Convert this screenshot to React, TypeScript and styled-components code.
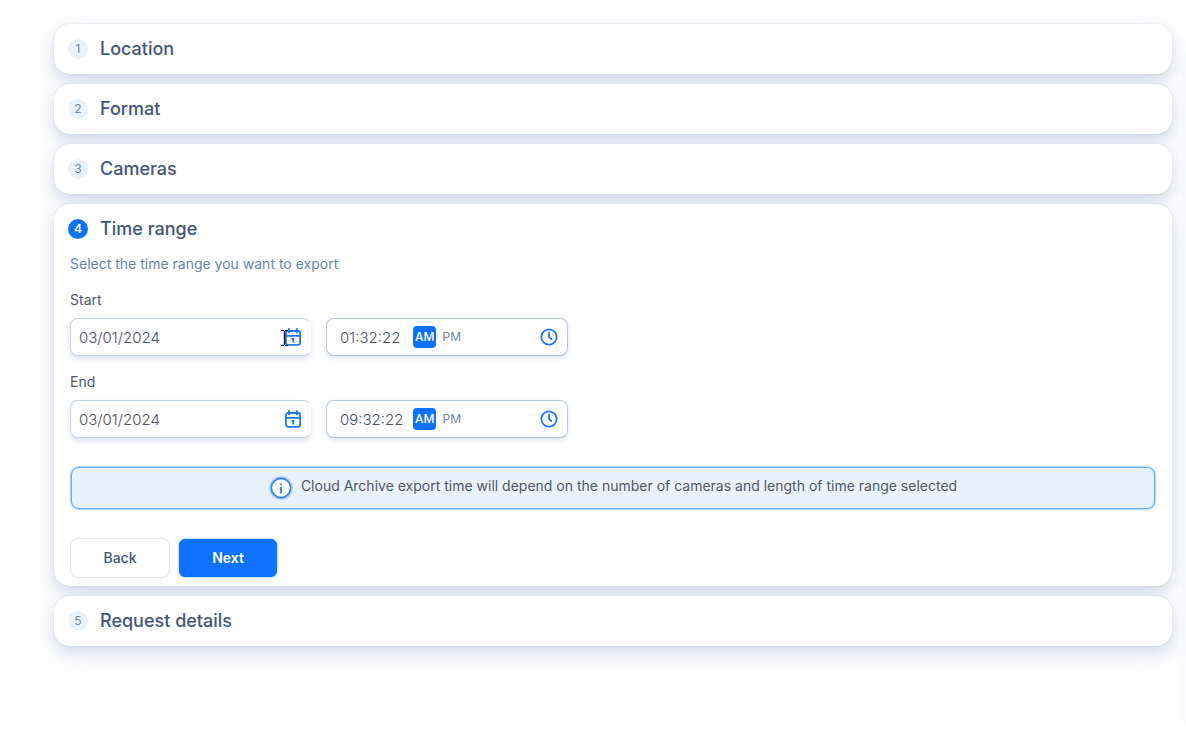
import React, { useState } from "react";
import styled, { createGlobalStyle } from "styled-components";

const GlobalStyle = createGlobalStyle`
  *, *::before, *::after { box-sizing: border-box; }
  body {
    margin: 0;
    background: #fefefe;
    color: #50586a;
    font-family: Inter, "Liberation Sans", sans-serif;
    font-size: 14px;
    line-height: 20px;
  }
  button, input { font: inherit; }
`;

const Page = styled.div`
  display: flex;
  min-height: 100vh;
  overflow: hidden;
`;

const Wizard = styled.main`
  flex: 1;
  display: flex;
  flex-direction: column;
  gap: 10px;
  padding: 24px 14px 108px 54px;
`;

const PageEdge = styled.div`
  width: 0;
  margin: 60px 0 30px;
  box-shadow: 0 0 10px 1px rgba(120, 130, 210, 0.16);
`;

const Card = styled.section`
  border-radius: 16px;
  background: #fefefe;
  box-shadow: 0 0 1px 1px rgba(178, 190, 220, 0.16),
    0 8px 22px rgba(98, 116, 185, 0.16), 0 6px 12px rgba(70, 105, 150, 0.12);
`;

const Heading = styled.h2`
  margin: 0;
`;

const HeaderButton = styled.button`
  display: flex;
  align-items: center;
  gap: 12px;
  width: 100%;
  height: 50px;
  padding: 0 14px;
  border: 0;
  background: none;
  color: #43557a;
  font-size: 18px;
  font-weight: 500;
  text-align: left;
  cursor: pointer;
`;

const StepNumber = styled.span<{ $active: boolean }>`
  width: 20px;
  height: 20px;
  border-radius: 50%;
  background: ${(p) => (p.$active ? "#0d72ff" : "#ebf1f8")};
  color: ${(p) => (p.$active ? "#ffffff" : "#7388a8")};
  font-size: 12px;
  font-weight: ${(p) => (p.$active ? 600 : 400)};
  line-height: 20px;
  text-align: center;
`;

const Body = styled.form`
  padding: 0 16px 8px;
`;

const Hint = styled.p`
  margin: 0 0 16px;
  color: #6c85ad;
`;

const FieldGroup = styled.div`
  display: flex;
  flex-direction: column;
  gap: 8px;
  margin-bottom: 16px;
`;

const Label = styled.label`
  align-self: flex-start;
`;

const FieldRow = styled.div`
  display: flex;
  flex-wrap: wrap;
  gap: 15px;
`;

const Field = styled.div<{ $time?: boolean }>`
  position: relative;
  display: flex;
  align-items: center;
  width: ${(p) => (p.$time ? 242 : 241)}px;
  height: 38px;
  padding: ${(p) => (p.$time ? "0 9px 0 13px" : "0 8px")};
  border: 1px solid;
  border-color: ${(p) =>
    p.$time ? "#bccadf #bccadf #aebdd4" : "#c3d3e6 transparent #c9d5e9 #c9d7e8"};
  border-radius: 8px;
  background: #fefefe;
  box-shadow: ${(p) =>
    p.$time ? "0 2px 5px rgba(90, 105, 175, 0.18)" : "0 3px 5px rgba(90, 105, 175, 0.2)"};
`;

const TextInput = styled.input<{ $time?: boolean }>`
  flex: ${(p) => (p.$time ? "0 0 73px" : "1")};
  min-width: 0;
  width: 73px;
  padding: 2px 0 0;
  border: 0;
  outline: 0;
  background: none;
  color: #4c5260;
  font-size: 15px;
  font-weight: 300;
`;

const Meridiem = styled.div`
  display: flex;
  flex: 1;
  align-items: center;
  gap: 5px;
`;

const MeridiemButton = styled.button<{ $on: boolean }>`
  height: 22px;
  padding: 0 ${(p) => (p.$on ? 2 : 1)}px;
  border: 0;
  border-radius: 4px;
  background: ${(p) => (p.$on ? "#0d72ff" : "none")};
  color: ${(p) => (p.$on ? "#ffffff" : "#7186a8")};
  font-size: 12px;
  font-weight: ${(p) => (p.$on ? 500 : 400)};
  line-height: 22px;
  cursor: pointer;
`;

const IconButton = styled.button`
  display: flex;
  padding: 0;
  border: 0;
  background: none;
  color: #2277ee;
  cursor: pointer;
`;

const Pointer = styled.svg`
  position: absolute;
  right: 21px;
  top: 10px;
  pointer-events: none;
`;

const Notice = styled.div`
  display: flex;
  align-items: center;
  justify-content: center;
  gap: 8px;
  min-height: 42px;
  margin: 29px 1px;
  padding: 0 8px;
  border: 1px solid #68aaf6;
  border-radius: 8px;
  background: #e9f2fc;
  box-shadow: 0 0 1px 1px #a9d7fb;
`;

const NoticeText = styled.p`
  margin: 0;
  padding-bottom: 4px;
`;

const InfoIcon = styled.svg`
  flex: none;
`;

const Actions = styled.div`
  display: flex;
  align-items: center;
  gap: 9px;
`;

const ActionButton = styled.button<{ $primary?: boolean }>`
  width: ${(p) => (p.$primary ? 98 : 100)}px;
  height: ${(p) => (p.$primary ? 38 : 40)}px;
  border: ${(p) => (p.$primary ? "0" : "1px solid #e3e5ee")};
  border-radius: ${(p) => (p.$primary ? 6 : 8)}px;
  background: ${(p) => (p.$primary ? "#0d72ff" : "#fefefe")};
  box-shadow: ${(p) => (p.$primary ? "0 0 1px 1px #c9e1fb" : "none")};
  color: ${(p) => (p.$primary ? "#ffffff" : "#465676")};
  font-weight: ${(p) => (p.$primary ? 600 : 500)};
  cursor: pointer;
`;

const CalendarIcon = () => (
  <svg width="18" height="20" viewBox="0 0 18 20" fill="none" stroke="currentColor" strokeWidth="1.8" strokeLinecap="round" aria-hidden="true">
    <rect x="1.9" y="4" width="14.2" height="13.8" rx="2" />
    <path d="M2 8.8h14M5 1.8v3.6M13 1.8v3.6" />
    <path d="M7.6 12H9.3v3.6" strokeLinecap="butt" />
  </svg>
);

const ClockIcon = () => (
  <svg width="18" height="18" viewBox="0 0 18 18" fill="none" stroke="currentColor" strokeWidth="1.8" strokeLinecap="round" strokeLinejoin="round" aria-hidden="true">
    <circle cx="9" cy="9" r="7.7" />
    <path d="M9 4.6V9l2.4 2" />
  </svg>
);

const TextPointer = () => (
  <Pointer width="8" height="18" viewBox="0 0 8 18" fill="none" stroke="#161a2c" aria-hidden="true">
    <path d="M0 1.5h3M4 1.5h3M0 16.5h3M4 16.5h3" />
    <path d="M3.5 2v14" strokeWidth="1.4" />
  </Pointer>
);

function Step({ number, title, children }: { number: number; title: string; children?: React.ReactNode }) {
  const active = Boolean(children);
  return (
    <Card>
      <Heading>
        <HeaderButton type="button" aria-expanded={active}>
          <StepNumber $active={active}>{number}</StepNumber>
          {title}
        </HeaderButton>
      </Heading>
      {children}
    </Card>
  );
}

function DateTime({ id, label, date, time, pointer }: { id: string; label: string; date: string; time: string; pointer?: boolean }) {
  const [half, setHalf] = useState("AM");
  return (
    <FieldGroup>
      <Label htmlFor={id}>{label}</Label>
      <FieldRow>
        <Field>
          <TextInput id={id} defaultValue={date} />
          <IconButton type="button" aria-label={`Choose ${label.toLowerCase()} date`}>
            <CalendarIcon />
          </IconButton>
          {pointer && <TextPointer />}
        </Field>
        <Field $time>
          <TextInput $time aria-label={`${label} time`} defaultValue={time} />
          <Meridiem>
            {["AM", "PM"].map((m) => (
              <MeridiemButton key={m} type="button" $on={half === m} aria-pressed={half === m} onClick={() => setHalf(m)}>
                {m}
              </MeridiemButton>
            ))}
          </Meridiem>
          <IconButton type="button" aria-label={`Choose ${label.toLowerCase()} time`}>
            <ClockIcon />
          </IconButton>
        </Field>
      </FieldRow>
    </FieldGroup>
  );
}

export default function App() {
  return (
    <Page>
      <GlobalStyle />
      <Wizard>
        <Step number={1} title="Location" />
        <Step number={2} title="Format" />
        <Step number={3} title="Cameras" />
        <Step number={4} title="Time range">
          <Body onSubmit={(e) => e.preventDefault()}>
            <Hint>Select the time range you want to export</Hint>
            <DateTime id="start" label="Start" date="03/01/2024" time="01:32:22" pointer />
            <DateTime id="end" label="End" date="03/01/2024" time="09:32:22" />
            <Notice role="note">
              <InfoIcon width="24" height="24" viewBox="0 0 24 24" fill="none" aria-hidden="true">
                <circle cx="12" cy="12" r="11.8" fill="#a6cffa" />
                <circle cx="12" cy="12" r="9.6" fill="#fefefe" stroke="#2b80ee" strokeWidth="1.6" />
                <path d="M12 11v6.4M12 7.6v1.6" stroke="#2b80ee" strokeWidth="1.8" />
              </InfoIcon>
              <NoticeText>
                Cloud Archive export time will depend on the number of cameras and length of time range selected
              </NoticeText>
            </Notice>
            <Actions>
              <ActionButton type="button">Back</ActionButton>
              <ActionButton type="submit" $primary>Next</ActionButton>
            </Actions>
          </Body>
        </Step>
        <Step number={5} title="Request details" />
      </Wizard>
      <PageEdge />
    </Page>
  );
}
